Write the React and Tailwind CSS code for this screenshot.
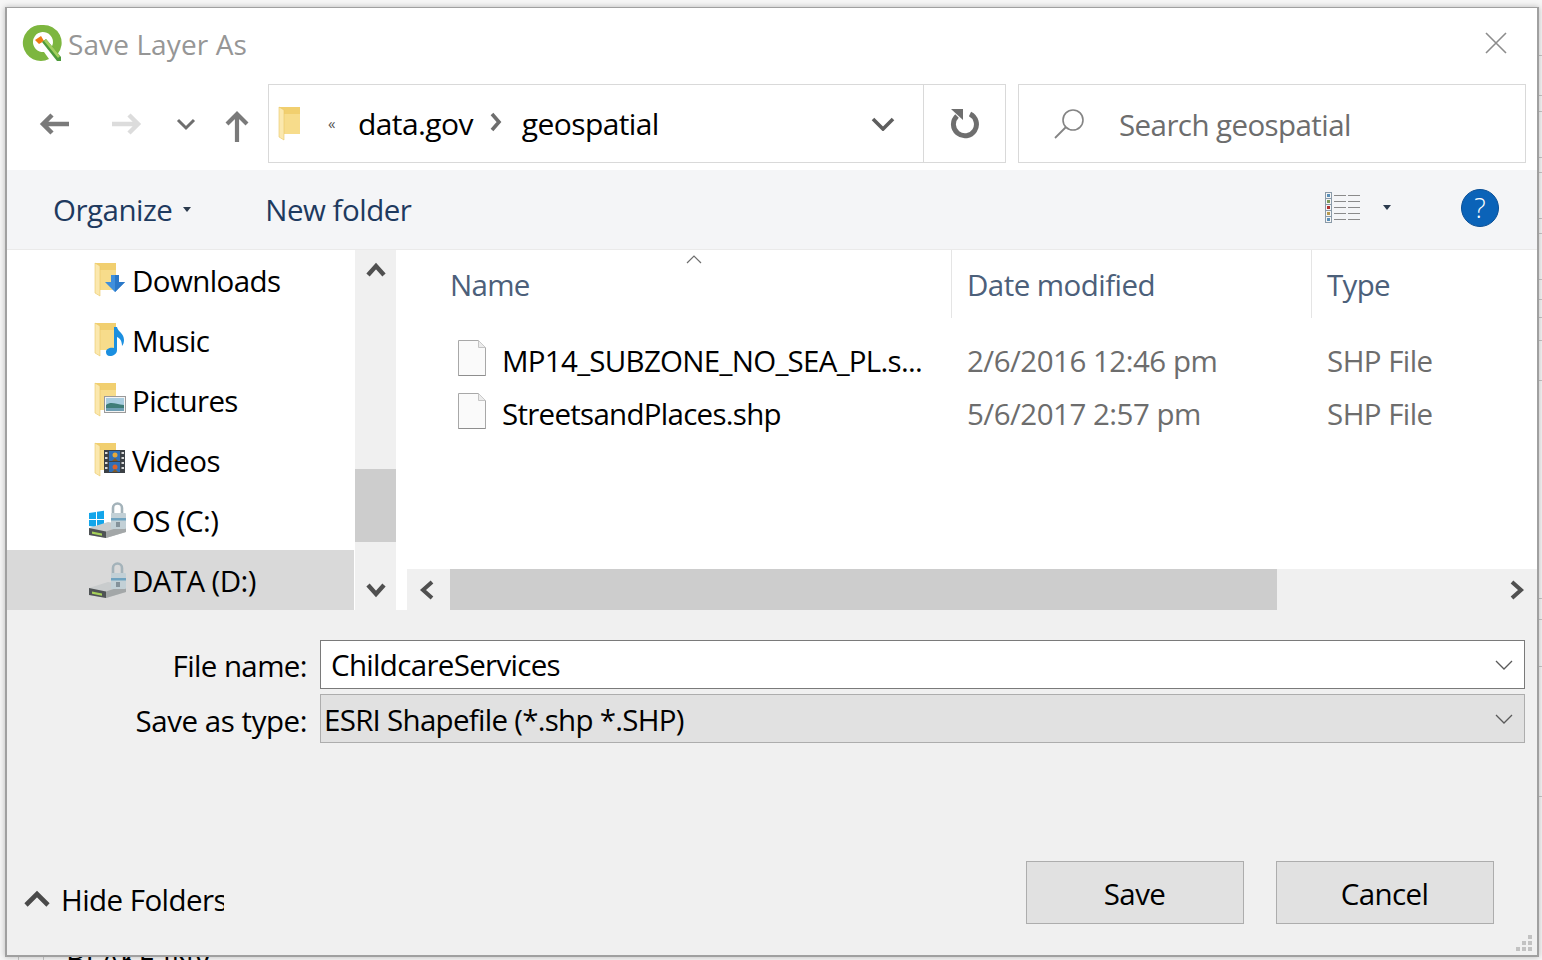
const FONT = "font-['Open_Sans','Noto_Sans',sans-serif]";

function Folder() {
  return (
    <svg width="24" height="36" viewBox="0 0 24 36" className="shrink-0">
      <path d="M1 1h21v27H6L1 27z" fill="#f1cf6f" />
      <path d="M5 8h17v20H5z" fill="#f7dc8b" />
      <path d="M1 1l5 3v30l-5-3z" fill="#fbe8ae" />
      <path d="M1 1l5 3v30l-5-3z" fill="none" stroke="#e9c766" strokeWidth="0.6" />
    </svg>
  );
}

function DownBadge() {
  return (
    <svg width="20" height="19" viewBox="0 0 20 19" className="absolute left-[11px] top-[12px]">
      <path d="M6 1h8v7h6l-10 10L0 8h6z" fill="#3f8fdc" />
      <path d="M10 1h4v7h6L10 18z" fill="#2a78c8" />
    </svg>
  );
}
function MusicBadge() {
  return (
    <svg width="20" height="30" viewBox="0 0 20 30" className="absolute left-[11px] top-[4px]">
      <path d="M9 1h3c1 5 7 6 7 13 0 3-1 5-2 6 0-5-2-8-5-9v13c0 4-4 6-7 6s-4-2-4-4c0-3 4-5 8-4z" fill="#1b8fe0" />
    </svg>
  );
}
function PictureBadge() {
  return (
    <svg width="22" height="18" viewBox="0 0 22 18" className="absolute left-[10px] top-[14px]">
      <rect x="0.5" y="0.5" width="21" height="16" fill="#f4f4f4" stroke="#9a9a9a" />
      <rect x="2" y="2" width="18" height="13" fill="#a9cde0" />
      <path d="M2 9c5-4 9-1 18 0v6H2z" fill="#3f7d78" />
      <path d="M2 12h18v3H2z" fill="#6f9fb4" />
    </svg>
  );
}
function VideoBadge() {
  return (
    <svg width="21" height="23" viewBox="0 0 21 23" className="absolute left-[10px] top-[8px]">
      <rect width="21" height="23" fill="#3c4146" />
      <rect x="5" y="1" width="11" height="10" fill="#2f6fb8" />
      <rect x="5" y="12" width="11" height="10" fill="#2f6fb8" />
      <circle cx="11" cy="5" r="2.5" fill="#e6a93a" />
      <circle cx="11" cy="17" r="2.5" fill="#d9622e" />
      <path d="M8 11l3-3 3 3zM8 22l3-3 3 3z" fill="#7f5a2a" />
      <g fill="#d8d8d8">
        <rect x="1" y="2" width="2.5" height="2" /><rect x="1" y="7" width="2.5" height="2" /><rect x="1" y="12" width="2.5" height="2" /><rect x="1" y="17" width="2.5" height="2" />
        <rect x="17.5" y="2" width="2.5" height="2" /><rect x="17.5" y="7" width="2.5" height="2" /><rect x="17.5" y="12" width="2.5" height="2" /><rect x="17.5" y="17" width="2.5" height="2" />
      </g>
    </svg>
  );
}

function Drive({ win }) {
  return (
    <svg width="38" height="36" viewBox="0 0 38 36" className="shrink-0">
      {win && (
        <g fill="#12a5ea">
          <path d="M1 11l7-1v7H1zM9 9.8l7-1V17H9zM1 18h7v7l-7-1zM9 18h7v8.2l-7-1z" />
        </g>
      )}
      <path d="M1 26l19-6 18 3v7L18 36 1 33z" fill="#c9cccd" />
      <path d="M1 26l17 3.5V36L1 33z" fill="#4f5355" />
      <path d="M4 29.5l10 2v2.2l-10-2z" fill="#a6d05a" />
      <path d="M18 29.5l20-6.5v7L18 36z" fill="#a3a7a8" />
      <path d="M25 12V6a4.5 4.5 0 0 1 9 0v6" fill="none" stroke="#a4b3ba" strokeWidth="2.6" />
      <rect x="23" y="11" width="15" height="16" rx="1" fill="#c2d0d6" />
      <rect x="23" y="16" width="15" height="2.5" fill="#6fa3c0" />
      <rect x="28" y="20" width="4" height="5" fill="#84929a" />
    </svg>
  );
}

function FileIcon() {
  return (
    <svg width="28" height="36" viewBox="0 0 28 36" className="shrink-0">
      <path d="M0.5 0.5h20l7 7v28H0.5z" fill="#fafafa" stroke="#a8a8a8" />
      <path d="M20.5 0.5v7h7" fill="#ececec" stroke="#c4c4c4" />
      <path d="M0.5 35.5h27" stroke="#8e8e8e" />
    </svg>
  );
}

function SideRow({ icon, label, selected }) {
  return (
    <div className={`flex h-[60px] items-center ${selected ? "bg-[#d9d9d9]" : ""}`}>
      <div className="relative ml-[75px] flex h-[36px] w-[50px] items-center">{icon}</div>
      <span className="pt-[2px] text-[29.5px] leading-none tracking-[-0.6px] text-black">{label}</span>
    </div>
  );
}

function FolderWith({ badge }) {
  return (
    <div className="relative ml-[12px] h-[36px] w-[38px]">
      <Folder />
      {badge}
    </div>
  );
}

function Chevron({ dir, className }) {
  const d = dir === "up" ? "M2 13L10 4l8 9" : "M2 4l8 9 8-9";
  return (
    <svg width="20" height="17" viewBox="0 0 20 17" className={className}>
      <path d={d} fill="none" stroke="#505050" strokeWidth="4.4" />
    </svg>
  );
}

function FileRow({ name, date }) {
  return (
    <div className="flex h-[53px] items-center">
      <div className="mb-[6px] ml-[51px] w-[44px]"><FileIcon /></div>
      <span className="w-[465px] whitespace-nowrap text-[29.5px] leading-none tracking-[-0.72px] text-black">{name}</span>
      <span className="w-[360px] whitespace-nowrap text-[29.5px] leading-none tracking-[-0.5px] text-[#6d6d6d]">{date}</span>
      <span className="whitespace-nowrap text-[29.5px] leading-none tracking-[-0.55px] text-[#6d6d6d]">SHP File</span>
    </div>
  );
}

function Button({ children }) {
  return (
    <div className="flex h-[63px] w-[218px] items-center justify-center border border-[#adadad] bg-[#e1e1e1] pr-[1px] pt-[3px] text-[29.5px] leading-none tracking-[-0.6px] text-black">
      {children}
    </div>
  );
}

const SHEET_LINES = [56, 40, 16, 46, 15, 46, 15, 46, 20, 18, 23, 40, 218, 21, 47, 130];

export default function App() {
  return (
    <div className={`${FONT} relative h-[960px] w-[1542px] overflow-hidden bg-[#f6f6f6]`}>
      {/* Background sheet peeking out on the right and below the dialog */}
      <div className="absolute right-0 top-0 flex h-[960px] w-[4px] flex-col">
        {SHEET_LINES.map((h, i) => (
          <div key={i} style={{ height: h }} className="border-b border-[#c6c6c6]" />
        ))}
      </div>
      <div className="absolute left-[66px] top-[944px] whitespace-nowrap text-[30px] leading-[30px] text-black">BLAKE INV</div>
      <div className="absolute left-[18px] top-[954px] h-[6px] w-px bg-[#c6c6c6]" />
      <div className="absolute left-[43px] top-[954px] h-[6px] w-px bg-[#c6c6c6]" />
      <div className="absolute left-[168px] top-[954px] h-[6px] w-px bg-[#c6c6c6]" />

      {/* Dialog */}
      <div className="absolute left-[5px] top-[7px] flex h-[950px] w-[1534px] flex-col border border-[#a0a0a0] border-l-[2px] border-r-[2px] border-b-[2px] bg-[#f0f0f0] shadow-[0_0_6px_rgba(0,0,0,0.25)]">
        {/* Title bar */}
        <div className="flex h-[70px] shrink-0 items-center bg-white">
          <svg width="42" height="40" viewBox="0 0 42 40" className="ml-[15px] shrink-0">
            <path d="M20 2a18 18 0 1 0 7 34l-5-7a10 10 0 1 1 7-4l6 7A18 18 0 0 0 20 2z" fill="#7db63f" />
            <path d="M13 17l6-4 3 5-5 3z" fill="#ee7913" />
            <path d="M20 19l4-3 15 18v4h-4z" fill="#4d9a3a" />
            <path d="M22 18l2-2 14 17-2 2z" fill="#a4cf5f" />
          </svg>
          <span className="ml-[4px] mt-[2px] text-[28px] leading-none tracking-[0.1px] text-[#969696]">Save Layer As</span>
          <svg width="24" height="24" viewBox="0 0 24 24" className="ml-auto mr-[29px] mt-[-1px]">
            <path d="M2 2l20 20M22 2L2 22" stroke="#8c8c8c" strokeWidth="1.6" />
          </svg>
        </div>

        {/* Navigation bar */}
        <div className="flex h-[92px] shrink-0 bg-white">
          <div className="flex w-[261px] items-center">
            <svg width="32" height="24" viewBox="0 0 32 24" className="ml-[31px]">
              <path d="M31 12H5M14 3l-9 9 9 9" fill="none" stroke="#7a7a7a" strokeWidth="4.5" />
            </svg>
            <svg width="32" height="24" viewBox="0 0 32 24" className="ml-[41px]">
              <path d="M1 12h26M18 3l9 9-9 9" fill="none" stroke="#dcdcdc" strokeWidth="4.5" />
            </svg>
            <svg width="20" height="14" viewBox="0 0 20 14" className="ml-[33px]">
              <path d="M2 3l8 8 8-8" fill="none" stroke="#6e6e6e" strokeWidth="3" />
            </svg>
            <svg width="24" height="32" viewBox="0 0 24 32" className="ml-[29px] mt-[4px]">
              <path d="M12 32V4M2 14L12 4l10 10" fill="none" stroke="#7a7a7a" strokeWidth="4.2" />
            </svg>
          </div>
          <div className="mt-[6px] flex h-[79px] w-[738px] shrink-0 items-center border border-[#d9d9d9] bg-white">
            <div className="ml-[9px] w-[50px]"><Folder /></div>
            <span className="w-[30px] text-[15px] leading-none text-[#555]">«</span>
            <span className="text-[30px] leading-none tracking-[-0.6px] text-black">data.gov</span>
            <svg width="14" height="20" viewBox="0 0 14 20" className="mb-[4px] ml-[16px] mr-[19px]">
              <path d="M3 2l7 8-7 8" fill="none" stroke="#6e6e6e" strokeWidth="3.6" />
            </svg>
            <span className="text-[30px] leading-none tracking-[-0.6px] text-black">geospatial</span>
            <svg width="24" height="14" viewBox="0 0 24 14" className="ml-auto mr-[28px]">
              <path d="M2 2l10 10L22 2" fill="none" stroke="#5e5e5e" strokeWidth="3.6" />
            </svg>
            <div className="flex h-full w-[82px] items-center justify-center border-l border-[#d9d9d9]">
              <svg width="32" height="32" viewBox="0 0 32 32" className="mb-[2px] mr-[2px]">
                <path d="M22 7a11.5 11.5 0 1 1-13 2" fill="none" stroke="#6e6e6e" strokeWidth="5" />
                <path d="M3 2h12v11z" fill="#6e6e6e" />
              </svg>
            </div>
          </div>
          <div className="ml-[12px] mt-[6px] flex h-[79px] w-[508px] shrink-0 items-center border border-[#d9d9d9] bg-white">
            <svg width="32" height="32" viewBox="0 0 32 32" className="ml-[34px]">
              <circle cx="20" cy="12" r="10" fill="none" stroke="#848484" strokeWidth="1.6" />
              <path d="M13 19L2 30" stroke="#848484" strokeWidth="1.8" />
            </svg>
            <span className="ml-[34px] pt-[2px] text-[29.5px] leading-none tracking-[-0.58px] text-[#6d6d6d]">Search geospatial</span>
          </div>
        </div>

        {/* Command bar */}
        <div className="flex h-[80px] shrink-0 items-center border-b border-[#eaeaea] bg-[#f4f5f7]">
          <span className="ml-[46px] text-[29.5px] leading-none tracking-[-0.5px] text-[#1e3a5f]">Organize</span>
          <svg width="8" height="5" viewBox="0 0 8 5" className="ml-[11px]"><path d="M0 0h8L4 5z" fill="#2b3a4d" /></svg>
          <span className="ml-[74px] text-[29.5px] leading-none tracking-[-0.52px] text-[#1e3a5f]">New folder</span>
          <svg width="36" height="32" viewBox="0 0 36 32" className="ml-auto mb-[4px]">
            {[0, 6, 12, 18, 24].map((y, i) => (
              <g key={y}>
                <rect x="0.5" y={y + 0.5} width="6" height="6" fill="#f5f5f5" stroke="#8a9aa8" />
                <rect x="2" y={y + 2} width="3" height="3" fill={["#5a8fb8", "#7d9a5a", "#b03030", "#b89a50", "#5a8fb8"][i]} />
                <path d={`M9 ${y + 3.5}h12M23 ${y + 3.5}h12`} stroke="#8a8a8a" strokeWidth="1" />
              </g>
            ))}
          </svg>
          <svg width="8" height="5" viewBox="0 0 8 5" className="mb-[4px] ml-[22px] mr-[-1px]"><path d="M0 0h8L4 5z" fill="#2b3a4d" /></svg>
          <div className="mb-[4px] ml-[71px] mr-[38px] flex h-[38px] w-[38px] items-center justify-center rounded-full border border-[#0a4f96] bg-[#0b63b8] text-[27px] font-light leading-none text-white">?</div>
        </div>

        {/* Browser */}
        <div className="flex h-[360px] shrink-0 bg-white">
          <div className="w-[347px] shrink-0">
            <SideRow label="Downloads" icon={<FolderWith badge={<DownBadge />} />} />
            <SideRow label="Music" icon={<FolderWith badge={<MusicBadge />} />} />
            <SideRow label="Pictures" icon={<FolderWith badge={<PictureBadge />} />} />
            <SideRow label="Videos" icon={<FolderWith badge={<VideoBadge />} />} />
            <SideRow label="OS (C:)" icon={<div className="ml-[6px]"><Drive win /></div>} />
            <SideRow label="DATA (D:)" selected icon={<div className="ml-[6px]"><Drive /></div>} />
          </div>
          <div className="ml-[1px] flex w-[41px] shrink-0 flex-col items-center bg-[#f0f0f0]">
            <Chevron dir="up" className="mt-[12px] shrink-0" />
            <div className="mt-[190px] h-[73px] w-full shrink-0 bg-[#cdcdcd]" />
            <Chevron dir="down" className="mt-[39px] shrink-0" />
          </div>
          <div className="ml-[11px] flex min-w-0 flex-1 flex-col bg-white">
            <div className="relative flex h-[68px] shrink-0">
              <svg width="16" height="9" viewBox="0 0 16 9" className="absolute left-[279px] top-[5px]">
                <path d="M1 8l7-7 7 7" fill="none" stroke="#6e6e6e" strokeWidth="1.2" />
              </svg>
              <div className="flex w-[545px] items-center border-r border-[#e5e5e5] pl-[43px] pt-[2px] text-[29.5px] tracking-[-0.7px] text-[#4c607a]">Name</div>
              <div className="flex w-[360px] items-center border-r border-[#e5e5e5] pl-[15px] pt-[2px] text-[29.5px] tracking-[-0.55px] text-[#4c607a]">Date modified</div>
              <div className="flex items-center pl-[15px] pt-[2px] text-[29.5px] tracking-[-0.7px] text-[#4c607a]">Type</div>
            </div>
            <div className="mt-[16px] flex-1">
              <FileRow name="MP14_SUBZONE_NO_SEA_PL.s..." date="2/6/2016 12:46 pm" />
              <FileRow name="StreetsandPlaces.shp" date="5/6/2017 2:57 pm" />
            </div>
            <div className="flex h-[41px] shrink-0 items-center bg-[#f0f0f0]">
              <svg width="18" height="20" viewBox="0 0 18 20" className="ml-[11px] shrink-0">
                <path d="M14 2L5 10l9 8" fill="none" stroke="#505050" strokeWidth="4" />
              </svg>
              <div className="ml-[14px] h-full w-[827px] shrink-0 bg-[#cdcdcd]" />
              <svg width="18" height="20" viewBox="0 0 18 20" className="ml-auto mr-[11px] shrink-0">
                <path d="M4 2l9 8-9 8" fill="none" stroke="#505050" strokeWidth="4" />
              </svg>
            </div>
          </div>
        </div>

        {/* Form */}
        <div className="relative flex flex-1 flex-col">
          <div className="mt-[30px] flex h-[49px] items-center">
            <label className="w-[300px] pt-[2px] text-right text-[29.5px] leading-none tracking-[-0.6px] text-black">File name:</label>
            <div className="ml-[13px] flex h-full w-[1205px] items-center border border-[#7a7a7a] bg-white pl-[10px] text-[29.5px] tracking-[-0.68px] text-black">
              <span className="pt-[1px] leading-none">ChildcareServices</span>
              <svg width="18" height="10" viewBox="0 0 18 10" className="ml-auto mr-[11px]"><path d="M1 1l8 8 8-8" fill="none" stroke="#5a5a5a" strokeWidth="1.3" /></svg>
            </div>
          </div>
          <div className="mt-[5px] flex h-[49px] items-center">
            <label className="w-[300px] pt-[4px] text-right text-[29.5px] leading-none tracking-[-0.45px] text-black">Save as type:</label>
            <div className="ml-[13px] flex h-full w-[1205px] items-center border border-[#adadad] bg-[#e1e1e1] pl-[3px] text-[29.5px] tracking-[-0.72px] text-black">
              <span className="pt-[3px] leading-none">ESRI Shapefile (*.shp *.SHP)</span>
              <svg width="18" height="10" viewBox="0 0 18 10" className="ml-auto mr-[11px]"><path d="M1 1l8 8 8-8" fill="none" stroke="#5a5a5a" strokeWidth="1.3" /></svg>
            </div>
          </div>
          <div className="mt-[118px] flex items-start">
            <div className="mt-[6px] flex h-[63px] w-[218px] items-center">
              <svg width="26" height="18" viewBox="0 0 26 18" className="ml-[17px] shrink-0">
                <path d="M2 15L13 4l11 11" fill="none" stroke="#4a4a4a" strokeWidth="4.6" />
              </svg>
              <span className="ml-[11px] w-[163px] overflow-hidden whitespace-nowrap pt-[2px] text-[29.5px] leading-none tracking-[-0.55px] text-black">Hide Folders</span>
            </div>
            <div className="ml-auto mr-[43px] flex gap-[32px]">
              <Button>Save</Button>
              <Button>Cancel</Button>
            </div>
          </div>
          {/* Resize grip */}
          <div className="absolute bottom-[4px] right-[5px] grid grid-cols-3 gap-[2px]">
            {[0, 0, 1, 0, 1, 1, 1, 1, 1].map((on, i) => (
              <div key={i} className={`h-[4px] w-[4px] ${on ? "bg-[#c2c2c2]" : ""}`} />
            ))}
          </div>
        </div>
      </div>
    </div>
  );
}
